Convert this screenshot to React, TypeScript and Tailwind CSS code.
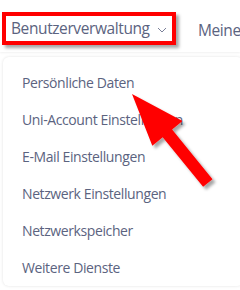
const items = [
  "Persönliche Daten",
  "Uni-Account Einstellungen",
  "E-Mail Einstellungen",
  "Netzwerk Einstellungen",
  "Netzwerkspeicher",
  "Weitere Dienste",
];

export default function App() {
  return (
    <div className="relative w-[240px] h-[290px] overflow-hidden bg-white font-['Open_Sans',sans-serif] text-[#5b6380]">
      {/* top nav */}
      <nav className="h-[52px] flex items-start pt-[12px] pl-[2px] gap-[22px] whitespace-nowrap shadow-[0_1px_2px_rgba(0,0,0,0.06)]">
        <div className="h-[33px] w-[174px] shrink-0 flex items-center pl-[5px] border-4 border-[#ff0000] shadow-[3px_3px_3px_rgba(0,0,0,0.35)]">
          <span className="text-[15.5px] tracking-[-0.4px] leading-none">Benutzerverwaltung</span>
          <svg className="ml-[7px] mt-[3px]" width="10" height="6" viewBox="0 0 10 6">
            <polyline points="1,1 5,5 9,1" fill="none" stroke="#7a8099" strokeWidth="1" />
          </svg>
        </div>
        <span className="text-[15.5px] tracking-[-0.4px] leading-none mt-[11px]">Meine</span>
      </nav>

      {/* dropdown */}
      <div className="ml-[3px] mt-[5px] w-[240px] rounded-md bg-white pt-[7px] shadow-[0_0_3px_rgba(0,0,0,0.12)]">
        {items.map((item) => (
          <div key={item} className="h-[37px] flex items-center pl-[19px] text-[14px] tracking-[-0.4px] whitespace-nowrap">
            {item}
          </div>
        ))}
      </div>

      {/* annotation arrow */}
      <svg className="absolute left-0 top-0 pointer-events-none" width="240" height="290" viewBox="0 0 240 290">
        <defs>
          <filter id="sh" x="-20%" y="-20%" width="140%" height="140%">
            <feDropShadow dx="3" dy="3" stdDeviation="1.5" floodColor="#000" floodOpacity="0.35" />
          </filter>
        </defs>
        <polygon
          points="132,94 182.5,121.1 172.1,129.6 212.5,179.2 203.1,186.8 162.7,137.2 152.3,145.7"
          fill="#ff0000"
          filter="url(#sh)"
        />
      </svg>
    </div>
  );
}
